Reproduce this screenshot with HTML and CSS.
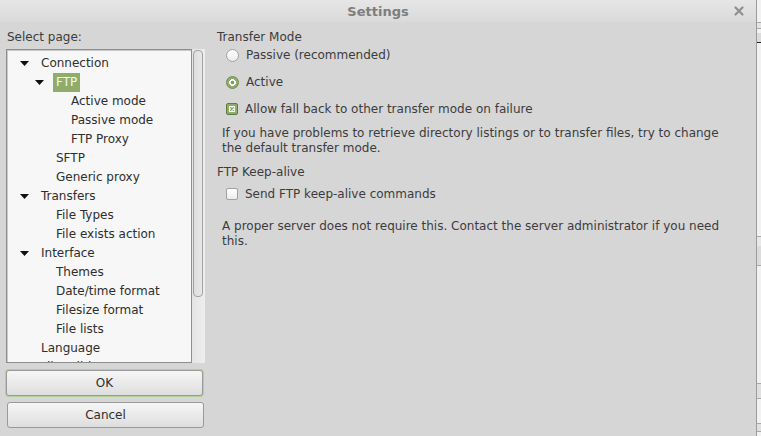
FILE: index.html
```html
<!DOCTYPE html>
<html>
<head>
<meta charset="utf-8">
<link rel="stylesheet" href="styles.css">
</head>
<body>
<div class="screen">
  <div class="window">
    <div class="titlebar">
      <span class="title">Settings</span>
      <span class="close"><svg width="12" height="12" viewBox="0 0 12 12"><path d="M2.5 2.5 L9.5 9.5 M9.5 2.5 L2.5 9.5" stroke="#8f8f8f" stroke-width="2.2" stroke-linecap="round"/></svg></span>
    </div>
    <div class="content">
      <div class="left">
        <div class="select-label">Select page:</div>
        <div class="treewrap">
          <div class="tree">
            <div class="row l0"><span class="exp"><svg width="9" height="5" viewBox="0 0 9 5"><polygon points="0,0 9,0 4.5,5" fill="#111"/></svg></span><span class="lbl">Connection</span></div>
            <div class="row l1"><span class="exp"><svg width="9" height="5" viewBox="0 0 9 5"><polygon points="0,0 9,0 4.5,5" fill="#111"/></svg></span><span class="lbl sel">FTP</span></div>
            <div class="row l2"><span class="exp"></span><span class="lbl">Active mode</span></div>
            <div class="row l2"><span class="exp"></span><span class="lbl">Passive mode</span></div>
            <div class="row l2"><span class="exp"></span><span class="lbl">FTP Proxy</span></div>
            <div class="row l1"><span class="exp"></span><span class="lbl">SFTP</span></div>
            <div class="row l1"><span class="exp"></span><span class="lbl">Generic proxy</span></div>
            <div class="row l0"><span class="exp"><svg width="9" height="5" viewBox="0 0 9 5"><polygon points="0,0 9,0 4.5,5" fill="#111"/></svg></span><span class="lbl">Transfers</span></div>
            <div class="row l1"><span class="exp"></span><span class="lbl">File Types</span></div>
            <div class="row l1"><span class="exp"></span><span class="lbl">File exists action</span></div>
            <div class="row l0"><span class="exp"><svg width="9" height="5" viewBox="0 0 9 5"><polygon points="0,0 9,0 4.5,5" fill="#111"/></svg></span><span class="lbl">Interface</span></div>
            <div class="row l1"><span class="exp"></span><span class="lbl">Themes</span></div>
            <div class="row l1"><span class="exp"></span><span class="lbl">Date/time format</span></div>
            <div class="row l1"><span class="exp"></span><span class="lbl">Filesize format</span></div>
            <div class="row l1"><span class="exp"></span><span class="lbl">File lists</span></div>
            <div class="row l0"><span class="exp"></span><span class="lbl">Language</span></div>
            <div class="row l0"><span class="exp"></span><span class="lbl">File editing</span></div>
          </div>
          <div class="scrollbar"><div class="thumb"></div></div>
        </div>
        <div class="btn focus"><div class="btn-inner">OK</div></div>
        <div class="btn"><div class="btn-inner">Cancel</div></div>
      </div>
      <div class="right">
        <div class="heading">Transfer Mode</div>
        <div class="opt first"><span class="radio"></span><span>Passive (recommended)</span></div>
        <div class="opt"><span class="radio on"></span><span>Active</span></div>
        <div class="opt"><span class="check on"><span class="check-box"><svg width="4" height="4" viewBox="0 0 4 4"><path d="M0.3 0.3 L3.7 3.7 M3.7 0.3 L0.3 3.7" stroke="#7f9e5c" stroke-width="1.2"/></svg></span></span><span>Allow fall back to other transfer mode on failure</span></div>
        <p class="para">If you have problems to retrieve directory listings or to transfer files, try to change the default transfer mode.</p>
        <div class="heading h2">FTP Keep-alive</div>
        <div class="opt kp"><span class="check"></span><span>Send FTP keep-alive commands</span></div>
        <p class="para p2">A proper server does not require this. Contact the server administrator if you need this.</p>
      </div>
    </div>
  </div>
  <div class="behind">
    <div class="bl b1"></div>
    <div class="bl b2"></div>
    <div class="bl b3"></div>
    <div class="bl b4"></div>
    <div class="bl b5"></div>
    <div class="bl b6"></div>
  </div>
</div>
</body>
</html>
```
FILE: styles.css
```css
html, body {
  margin: 0;
  padding: 0;
  width: 761px;
  height: 436px;
  overflow: hidden;
}
body {
  font-family: "DejaVu Sans", sans-serif;
  font-size: 12px;
  color: #3c3c3c;
}
.screen {
  display: flex;
  width: 761px;
  height: 436px;
}
.window {
  width: 756px;
  height: 436px;
  background: #d6d6d6;
  border-right: 1px solid #9c9c9c;
  display: flex;
  flex-direction: column;
}
.titlebar {
  height: 22px;
  flex: none;
  background: linear-gradient(#e6e6e6, #dadada);
  display: flex;
  align-items: center;
  justify-content: center;
  position: relative;
}
.title {
  font-weight: bold;
  font-size: 13px;
  color: #7d7d7d;
  padding-top: 1px;
}
.close {
  position: absolute;
  left: 733px;
  top: 5px;
  width: 12px;
  height: 12px;
}
.close svg { display: block; }
.content {
  flex: 1;
  display: flex;
}
.left {
  width: 199px;
  padding-left: 6px;
  display: flex;
  flex-direction: column;
}
.select-label {
  margin-left: 1px;
  padding-top: 8px;
  line-height: 15px;
  height: 19px;
}
.treewrap {
  display: flex;
  height: 314px;
}
.tree {
  width: 184px;
  background: #f7f7f7;
  border: 1px solid #8e8e8e;
  box-shadow: inset 1px 1px 0 #c8c8c8;
  overflow: hidden;
  padding-top: 4px;
  box-sizing: content-box;
  height: 308px;
}
.row {
  height: 19px;
  display: flex;
  align-items: center;
  white-space: nowrap;
}
.row.l0 { padding-left: 10px; }
.row.l1 { padding-left: 25px; }
.row.l2 { padding-left: 40px; }
.exp {
  width: 21px;
  height: 19px;
  display: flex;
  align-items: center;
  padding-left: 3px;
  box-sizing: border-box;
}
.exp svg { display: block; }
.lbl {
  padding: 0 3px;
  line-height: 19px;
  color: #2e2e2e;
}
.lbl.sel {
  background: #8fac6a;
  color: #f4f8ee;
}
.scrollbar {
  width: 13px;
  height: 314px;
  background: linear-gradient(90deg, #e4e4e4, #eeeeee);
  padding: 1px 1px 0 1px;
  box-sizing: border-box;
}
.thumb {
  width: 10px;
  height: 247px;
  border: 1px solid #a2a2a2;
  border-radius: 4px;
  box-sizing: border-box;
  background: linear-gradient(90deg, #dedede, #e8e8e8);
}
.btn {
  width: 197px;
  height: 26px;
  box-sizing: border-box;
  border-radius: 4px;
  padding: 1px;
}
.btn.focus {
  margin-top: 6px;
  background: #b2cf97;
  width: 199px;
  height: 28px;
  margin-left: -1px;
}
.btn + .btn {
  margin-top: 5px;
  margin-left: 1px;
  padding: 0;
}
.btn-inner {
  height: 100%;
  box-sizing: border-box;
  border: 1px solid #9a9a9a;
  border-radius: 3px;
  background: linear-gradient(#f6f6f6, #dedede);
  display: flex;
  align-items: center;
  justify-content: center;
  color: #2f2f2f;
}
.right {
  flex: 1;
  padding-left: 12px;
  padding-top: 8px;
}
.heading {
  line-height: 15px;
}
.heading.h2 {
  margin-top: 9px;
}
.opt {
  height: 20px;
  margin-top: 7px;
  margin-left: 9px;
  display: flex;
  align-items: center;
  gap: 7px;
}
.opt.first { margin-top: 0; }
.opt.kp { margin-top: 4px; }
.radio {
  width: 13px;
  height: 13px;
  box-sizing: border-box;
  border-radius: 50%;
  border: 1px solid #a3a3a3;
  background: linear-gradient(#ffffff, #ececec);
  flex: none;
}
.radio.on {
  border: 1px solid #6f8a52;
  background: radial-gradient(circle, #7f9e5c 0 1.6px, #ffffff 2.1px 3.1px, #8fae6b 3.6px);
}
.check {
  width: 12px;
  height: 12px;
  box-sizing: border-box;
  border: 1px solid #a0a0a0;
  border-radius: 2px;
  background: linear-gradient(#ffffff, #ececec);
  flex: none;
  display: flex;
  align-items: center;
  justify-content: center;
}
.check.on {
  border: 1px solid #5e7a45;
  background: #8fae6b;
}
.check-box {
  width: 6px;
  height: 6px;
  background: #f2f6ee;
  display: flex;
  align-items: center;
  justify-content: center;
}
.check-box svg { display: block; }
.para {
  margin: 7px 0 0 5px;
  width: 515px;
  line-height: 15px;
}
.para.p2 {
  margin-top: 15px;
}
.behind {
  width: 4px;
  height: 436px;
  background: #f2f2f2;
  position: relative;
}
.bl {
  position: absolute;
  left: 0;
  width: 4px;
}
.b1 { top: 22px; height: 5px; border-top: 1px solid #a8a8a8; border-bottom: 1px solid #a8a8a8; background: #e4e4e4; }
.b2 { top: 33px; height: 9px; background: #dcdcdc; border-bottom: 1px solid #222; }
.b3 { top: 236px; height: 9px; border-top: 1px solid #a8a8a8; border-bottom: 1px solid #a8a8a8; background: #e8e8e8; }
.b4 { top: 246px; height: 19px; background: #dcdcdc; border-bottom: 1px solid #aaa; }
.b5 { top: 383px; height: 14px; border-top: 1px solid #a8a8a8; border-bottom: 1px solid #a8a8a8; background: #e0e0e0; }
.b6 { top: 423px; height: 7px; border-top: 1px solid #a8a8a8; border-bottom: 1px solid #a8a8a8; background: #e0e0e0; }
```
